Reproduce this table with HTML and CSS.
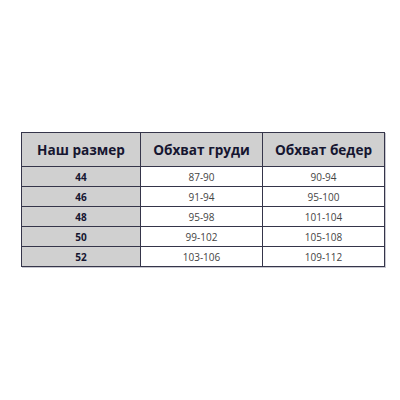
FILE: index.html
```html
<!DOCTYPE html>
<html>
<head>
<meta charset="utf-8">
<link rel="stylesheet" href="styles.css">
</head>
<body>
<div class="page">
  <table class="sizes">
    <thead>
      <tr>
        <th class="c1">Наш размер</th>
        <th class="c2">Обхват груди</th>
        <th class="c3">Обхват бедер</th>
      </tr>
    </thead>
    <tbody>
      <tr><td class="size">44</td><td>87-90</td><td>90-94</td></tr>
      <tr><td class="size">46</td><td>91-94</td><td>95-100</td></tr>
      <tr><td class="size">48</td><td>95-98</td><td>101-104</td></tr>
      <tr><td class="size">50</td><td>99-102</td><td>105-108</td></tr>
      <tr><td class="size">52</td><td>103-106</td><td>109-112</td></tr>
    </tbody>
  </table>
</div>
</body>
</html>
```

FILE: styles.css
```css
html, body {
  margin: 0;
  padding: 0;
  background: #ffffff;
}

.page {
  width: 400px;
  height: 400px;
  padding: 132px 0 0 21px;
  box-sizing: border-box;
}

.sizes {
  border-collapse: collapse;
  table-layout: fixed;
  width: 363px;
  font-family: "Open Sans", "Noto Sans", sans-serif;
  box-shadow: 1px 1px 0 #c8c8d0;
}

.sizes th,
.sizes td {
  border: 1px solid #35354a;
  text-align: center;
  padding: 0;
}

.sizes th {
  height: 33px;
  background: #d0d0d0;
  color: #161630;
  font-size: 13.6px;
  font-weight: 700;
}

.c1 { width: 118px; }
.c2 { width: 121px; }
.c3 { width: 121px; }

.sizes td {
  height: 19px;
  font-size: 10px;
  color: #444;
  background: #ffffff;
}

.sizes td.size {
  background: #d0d0d0;
  color: #161630;
  font-weight: 700;
}
```
